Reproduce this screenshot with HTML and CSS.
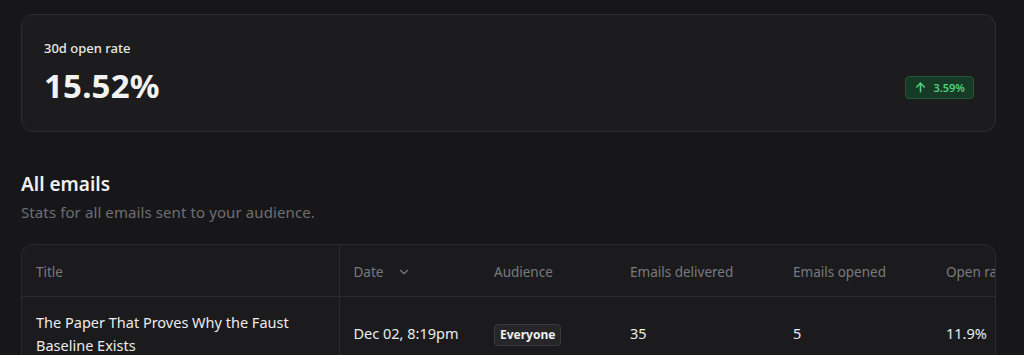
FILE: index.html
```html
<!DOCTYPE html>
<html lang="en">
<head>
  <meta charset="UTF-8">
  <title>Email stats</title>
  <link rel="stylesheet" href="styles.css">
</head>
<body>

  <div class="stat-card">
    <div class="stat-label">30d open rate</div>
    <div class="stat-row">
      <div class="stat-value">15.52%</div>
      <div class="trend">
        <svg width="13" height="13" viewBox="0 0 24 24" fill="none" stroke="currentColor" stroke-width="2.8" stroke-linecap="round" stroke-linejoin="round"><path d="M12 20V4"/><path d="M5 11l7-7 7 7"/></svg>
        3.59%
      </div>
    </div>
  </div>

  <div class="section-head">
    <h2>All emails</h2>
    <p>Stats for all emails sent to your audience.</p>
  </div>

  <div class="table-wrap">
    <table class="emails">
      <colgroup>
        <col style="width:317px">
        <col style="width:141px">
        <col style="width:136px">
        <col style="width:163px">
        <col style="width:153px">
        <col style="width:130px">
      </colgroup>
      <thead>
        <tr>
          <th class="sticky">Title</th>
          <th>Date <svg class="sort" width="14" height="14" viewBox="0 0 24 24" fill="none" stroke="currentColor" stroke-width="2" stroke-linecap="round" stroke-linejoin="round"><path d="M6 9l6 6 6-6"/></svg></th>
          <th>Audience</th>
          <th>Emails delivered</th>
          <th>Emails opened</th>
          <th>Open rate</th>
        </tr>
      </thead>
      <tbody>
        <tr>
          <td class="sticky">The Paper That Proves Why the Faust Baseline Exists</td>
          <td>Dec 02, 8:19pm</td>
          <td><span class="tag">Everyone</span></td>
          <td>35</td>
          <td>5</td>
          <td>11.9%</td>
        </tr>
      </tbody>
    </table>
  </div>

</body>
</html>
```

FILE: styles.css
```css
body {
  margin: 0;
  padding: 14px 28px 0 21px;
  background: #171719;
  color: #ececec;
  font-family: 'Noto Sans', sans-serif;
  overflow: hidden;
}

.stat-card {
  background: #1c1c1e;
  border: 1px solid #2c2c2e;
  border-radius: 12px;
  padding: 24px 21px 22px 22px;
  height: 70px;
}

.stat-label {
  font-size: 13px;
  font-weight: 500;
  color: #e8e8e8;
}

.stat-row {
  display: flex;
  align-items: center;
  justify-content: space-between;
  margin-top: 9px;
}

.stat-value {
  font-size: 33px;
  font-weight: 700;
  color: #f2f2f2;
  letter-spacing: 0.2px;
  line-height: 40px;
}

.trend {
  display: flex;
  align-items: center;
  gap: 6px;
  background: #173a26;
  border: 1px solid #235536;
  color: #4fd17f;
  border-radius: 4px;
  font-size: 11px;
  font-weight: 600;
  padding: 2px 8px 2px 8px;
  height: 17px;
  margin-top: 2px;
}

.section-head {
  margin-top: 39px;
}

.section-head h2 {
  margin: 0;
  font-size: 19px;
  font-weight: 600;
  color: #f0f0f0;
}

.section-head p {
  margin: 5px 0 0;
  font-size: 15px;
  letter-spacing: 0.1px;
  color: #6f6f72;
}

.table-wrap {
  margin-top: 22px;
  border: 1px solid #2a2a2c;
  border-bottom: none;
  border-radius: 12px 12px 0 0;
  background: #1b1b1d;
  overflow: hidden;
}

.emails {
  border-collapse: collapse;
  table-layout: fixed;
  width: 1040px;
}

.emails th {
  text-align: left;
  font-size: 13.5px;
  font-weight: 400;
  color: #7a7a7d;
  padding: 3px 14px 0;
  height: 48px;
  border-bottom: 1px solid #2c2c2e;
  white-space: nowrap;
}

.emails td {
  font-size: 14.5px;
  color: #ececec;
  padding: 14px 14px 0;
  height: 58px;
  vertical-align: top;
  line-height: 23px;
}

.emails td:not(.sticky) {
  padding-top: 25px;
}

.sticky {
  border-right: 1px solid #2c2c2e;
}

.sort {
  margin-left: 10px;
  vertical-align: -2px;
}

.tag {
  display: inline-block;
  background: #262628;
  border: 1px solid #3a3a3c;
  border-radius: 4px;
  font-size: 12px;
  font-weight: 700;
  line-height: 20px;
  padding: 0 5px;
  margin-top: -2px;
  color: #f0f0f0;
}
```
